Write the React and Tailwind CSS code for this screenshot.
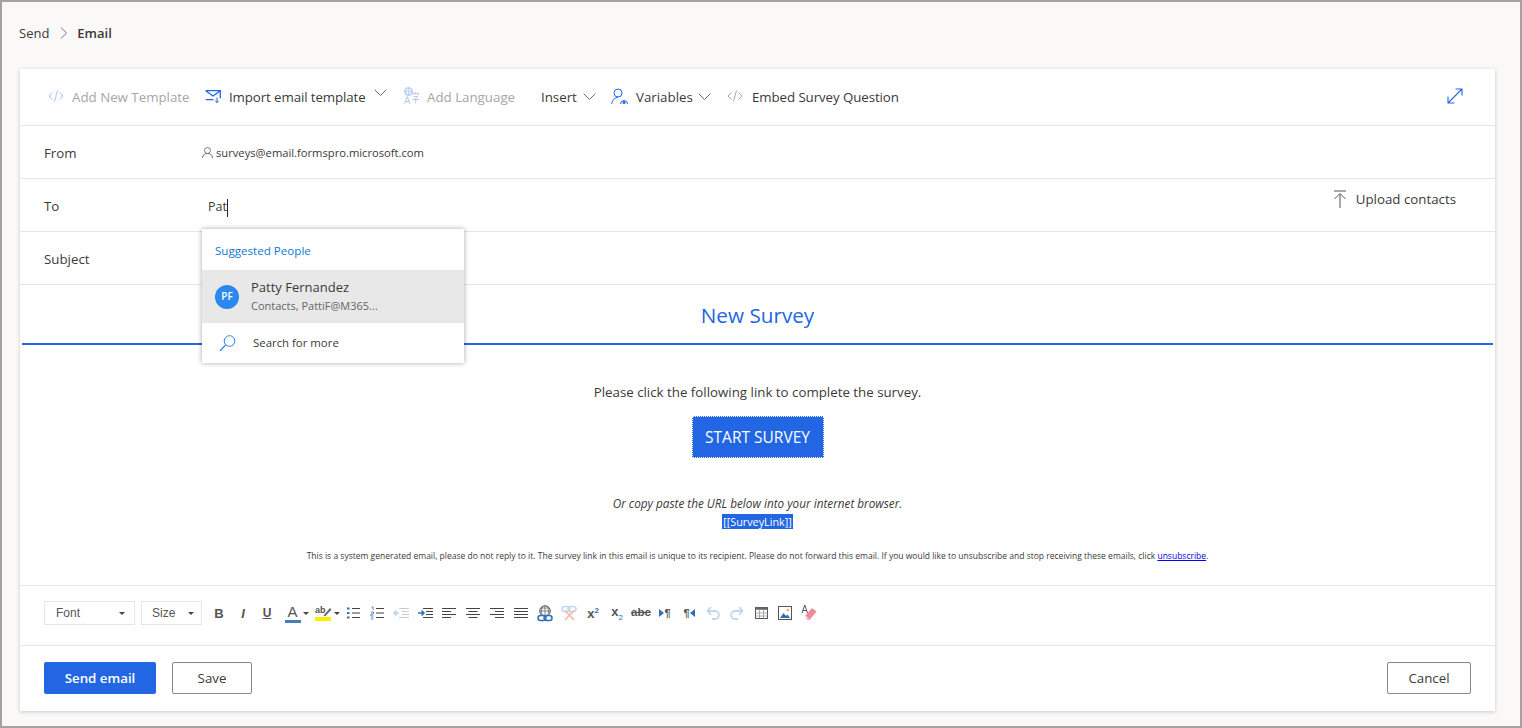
import React from "react";

const S = ({ w = 16, h = 16, vb, className = "", children }) => (
  <svg width={w} height={h} viewBox={vb || `0 0 ${w} ${h}`} fill="none" className={"shrink-0 " + className}>{children}</svg>
);
const Chevron = ({ className = "" }) => (
  <S w={13} h={8} className={className}><path d="M.7.7 6.500 6.500 12.300.7" stroke="#6b6b6b" strokeWidth="1" /></S>
);
const Code = ({ c }) => (
  <S w={16} h={12}><path d="M4.500 2.500 1 6l3.500 3.500M11.500 2.500 15 6l-3.500 3.500M9.500.5l-3 11" stroke={c} strokeWidth="1" /></S>
);
const Lines = ({ d }) => (
  <S w={14} h={12}><path d={d} stroke="#444" strokeWidth="1" /></S>
);
const Btn = ({ children }) => <div className="w-6 h-6 flex items-center justify-center shrink-0">{children}</div>;
const Cell = ({ className = "", children }) => <span className={"leading-none " + className}>{children}</span>;

export default function App() {
  return (
    <div className="w-[1522px] h-[728px] border-2 border-[#a3a3a3] bg-[#faf9f8] text-[#3b3a39] overflow-hidden text-[13.3px]" style={{ fontFamily: '"Open Sans","Noto Sans",sans-serif' }}>
      <div className="h-[67px] flex items-start pl-[17px] pt-[22px] text-[13px] leading-[18px]">
        <span>Send</span>
        <S w={8} h={12} className="ml-[11px] mr-[9px] mt-[3px]"><path d="M1 .5 6.500 6 1 11.500" stroke="#777" /></S>
        <span className="font-semibold">Email</span>
      </div>

      <div className="relative ml-[18px] w-[1475px] h-[642px] bg-white shadow-[0_1px_4px_rgba(0,0,0,0.2)] flex flex-col">
        {/* top toolbar */}
        <div className="h-[57px] shrink-0 border-b border-[#e6e6e6] flex items-center pl-[28px] pr-[32px]">
          <div className="-mt-[2px]"><Code c="#a9c4f2" /></div>
          <span className="ml-2 w-[117px] pt-[2px] whitespace-nowrap text-[#a6a6a6]">Add New Template</span>
          <S w={16} h={14} className="ml-[16px] -mt-[2px]"><path d="M.7 1.700h14.600v7.500M8.500 10.700H.7zM.7 1.700 8 7l7.300-5.300" stroke="#2266e3" strokeWidth="1.300" /><path d="M12 8.500v5M10.300 12 12 13.600 13.700 12" stroke="#2266e3" /></S>
          <span className="ml-2 w-[138px] pt-[2px] whitespace-nowrap tracking-[-0.1px]">Import email template</span>
          <Chevron className="ml-[7px] -mt-[8px]" />
          <S w={16} h={18} className="ml-[16px] -mt-[2px]"><circle cx="5.500" cy="4.500" r="4" stroke="#a9c4f2" /><path d="M1.500 4.500h8M5.500.5v8M3 4.500c0-4 5-4 5 0s-5 4-5 0" stroke="#a9c4f2" strokeWidth=".7" /><path d="M1.500 17l2.800-7.500L7 17M2.500 14.500h3.600M10 6.500h5.500v1.500M10 8V6.500M12.500 5v1.500M10.500 9.500h4l-1.800 2v5M9.500 12.500h6.500" stroke="#a9c4f2" strokeWidth=".9" /></S>
          <span className="ml-2 w-[90px] pt-[2px] whitespace-nowrap text-[#a6a6a6]">Add Language</span>
          <span className="ml-[24px] w-[34px] pt-[2px] whitespace-nowrap">Insert</span>
          <Chevron className="ml-2" />
          <S w={17} h={18} className="ml-[15px] -mt-[1px]"><circle cx="7" cy="5" r="4" stroke="#2266e3" /><path d="M.7 16c.4-4 3-6.500 6.300-6.500" stroke="#2266e3" /><path d="M9.500 16a3.500 3.500 0 0 1 7 0" stroke="#2266e3" /><circle cx="13" cy="14.500" r="1.500" fill="#2266e3" /></S>
          <span className="ml-[8px] w-[54px] pt-[2px] whitespace-nowrap">Variables</span>
          <Chevron className="ml-2" />
          <div className="ml-[16px] -mt-[2px]"><Code c="#a6a6a6" /></div>
          <span className="ml-[9px] pt-[2px] whitespace-nowrap tracking-[-0.08px]">Embed Survey Question</span>
          <S w={16} h={16} className="ml-auto -mt-[3px]"><path d="M1.500 14.500 14.500 1.500M8.500 1h6.500v6.500M1 8.500V15h6.500" stroke="#2266e3" strokeWidth="1.100" /></S>
        </div>

        {/* fields */}
        <div className="h-[53px] shrink-0 border-b border-[#e6e6e6] flex items-center pl-[24px]">
          <span className="w-[158px] pt-[4px]">From</span>
          <S w={11} h={11} className="mr-[3px]"><circle cx="5.500" cy="3.500" r="3" stroke="#777" /><path d="M.5 11c0-3 2-4.500 5-4.500s5 1.500 5 4.500" stroke="#777" /></S>
          <span className="text-[11.2px] pt-[2px]">surveys@email.formspro.microsoft.com</span>
        </div>
        <div className="h-[53px] shrink-0 border-b border-[#e6e6e6] flex items-center pl-[24px]">
          <span className="w-[164px] pt-[4px]">To</span>
          <span className="text-[12.500px] pt-[5px]">Pat</span>
          <span className="w-px h-[18px] bg-[#222] mt-[5px]" />
          <div className="ml-auto mr-[39px] -mt-[12px] flex items-center">
            <S w={14} h={18}><path d="M1 1h12M7 18V4M1.500 9 7 3.500 12.500 9" stroke="#555" /></S>
            <span className="ml-[9px] pt-[2px]">Upload contacts</span>
          </div>
        </div>
        <div className="h-[53px] shrink-0 border-b border-[#e6e6e6] flex items-center pl-[24px]">
          <span className="pt-[4px]">Subject</span>
        </div>

        {/* dropdown */}
        <div className="absolute left-[182px] top-[160px] w-[262px] h-[134px] bg-white shadow-[0_0_5px_rgba(0,0,0,0.35)] z-10 flex flex-col">
          <div className="h-[41px] flex items-center pl-[13px] pt-[3px] text-[11.6px] text-[#0f78d4]">Suggested People</div>
          <div className="h-[53px] bg-[#e8e8e8] flex items-center pl-[13px]">
            <div className="w-6 h-6 rounded-full bg-[#2b88ee] text-white text-[10px] font-semibold flex items-center justify-center">PF</div>
            <div className="ml-[12px] flex flex-col pb-[2px]">
              <span className="text-[13px] leading-[18px]">Patty Fernandez</span>
              <span className="mt-[2px] text-[11px] leading-[16px] text-[#666]">Contacts, PattiF@M365...</span>
            </div>
          </div>
          <div className="flex-1 flex items-center pl-[17px]">
            <S w={17} h={17}><circle cx="10.500" cy="6" r="5.300" stroke="#2b88ee" /><path d="M6.500 10 1 16" stroke="#2b88ee" strokeWidth="1.200" /></S>
            <span className="ml-[17px] text-[11.400px]">Search for more</span>
          </div>
        </div>

        {/* body */}
        <div className="h-[301px] shrink-0 border-b border-[#e6e6e6] flex flex-col items-center">
          <div className="h-[60px] w-[1471px] shrink-0 border-b-2 border-[#2266e3] flex items-center justify-center text-[20.700px] text-[#2266e3] pt-[3px]">New Survey</div>
          <p className="mt-[37px] leading-[20px] text-[13.300px]">Please click the following link to complete the survey.</p>
          <div className="mt-[14px] w-[132px] h-[42px] bg-[#2266e3] outline-1 -outline-offset-1 outline-dotted outline-white text-white text-[15.500px] pt-[2px] flex items-center justify-center">START SURVEY</div>
          <p className="mt-[36px] text-[11.750px] italic leading-[18px]">Or copy paste the URL below into your internet browser.</p>
          <p className="mt-[2px] bg-[#2266e3] text-white text-[10.800px] leading-[15px] px-px">[[SurveyLink]]</p>
          <p className="mt-[20px] text-[8.520px] leading-[14px] whitespace-nowrap">This is a system generated email, please do not reply to it. The survey link in this email is unique to its recipient. Please do not forward this email. If you would like to unsubscribe and stop receiving these emails, click <span className="text-[#0000ee] underline">unsubscribe</span>.</p>
        </div>

        {/* editor toolbar */}
        <div className="h-[61px] shrink-0 border-b border-[#e6e6e6] flex items-center pl-[24px] -mt-px pt-px pb-[5px]" style={{ fontFamily: '"Liberation Sans",sans-serif' }}>
          <div className="w-[91px] h-6 border border-[#e6e6e6] flex items-center justify-between pl-[11px] pr-[9px] text-[12px] text-[#555]">
            Font <span className="border-x-[3px] border-t-[3px] border-x-transparent border-t-[#444]" />
          </div>
          <div className="ml-[6px] w-[61px] h-6 border border-[#e6e6e6] flex items-center justify-between pl-[10px] pr-[7px] text-[12px] text-[#555]">
            Size <span className="border-x-[3px] border-t-[3px] border-x-transparent border-t-[#444]" />
          </div>
          <div className="ml-[5px] flex items-center text-[#555]">
            <Btn><Cell className="text-[13px] font-bold">B</Cell></Btn>
            <Btn><Cell className="text-[13px] italic font-bold" >I</Cell></Btn>
            <Btn><Cell className="text-[12px] font-bold underline">U</Cell></Btn>
            <div className="w-[31px] h-6 flex items-center pl-[5px] shrink-0">
              <div className="flex flex-col items-center w-[17px]"><Cell className="text-[15px]">A</Cell><span className="w-[16px] h-[3px] bg-[#4a7ebb] mt-[1px]" /></div>
              <span className="ml-[2px] border-x-[3px] border-t-[3px] border-x-transparent border-t-[#444]" />
            </div>
            <div className="w-[31px] h-6 flex items-center pl-[5px] shrink-0">
              <S w={17} h={16}>
                <text x="0" y="8" fontSize="9" fontWeight="700" fill="#555" fontFamily="Liberation Sans">ab</text>
                <path d="M9 10 15 3l1.500 1.500-6 6.500H8.500z" fill="#666" />
                <rect x="0" y="12" width="16" height="4" fill="#ffee00" />
              </S>
              <span className="ml-[2px] border-x-[3px] border-t-[3px] border-x-transparent border-t-[#444]" />
            </div>
            <Btn><S w={14} h={14}><path d="M6 2.500h8M6 7h8M6 11.500h8" stroke="#444" /><path d="M1 2.500h3M1 7h3M1 11.500h3" stroke="#2f6fb5" strokeWidth="2.200" strokeDasharray="2.500 1" /></S></Btn>
            <Btn><S w={14} h={14}><path d="M6 2.500h8M6 7h8M6 11.500h8" stroke="#444" /><path d="M1.500 1h1.500v3M1 6h2.500v2H1v2h2.500M1 12h2.500M1 14h2.500" stroke="#2f6fb5" strokeWidth=".8" /></S></Btn>
            <Btn><S w={16} h={12}><path d="M6 1.500h10M9 4.500h7M9 7.500h7M6 10.500h10" stroke="#ccc" /><path d="M6 6H1M3.500 3.500 1 6l2.500 2.500" stroke="#b7d0ec" strokeWidth="1.500" /></S></Btn>
            <Btn><S w={16} h={12}><path d="M6 1.500h10M9 4.500h7M9 7.500h7M6 10.500h10" stroke="#444" /><path d="M1 6h6M4.500 3.500 7 6 4.500 8.500" stroke="#2f6fb5" strokeWidth="1.500" /></S></Btn>
            <Btn><Lines d="M0 1.500h14M0 4.500h9M0 7.500h14M0 10.500h9" /></Btn>
            <Btn><Lines d="M0 1.500h14M2.500 4.500h9M0 7.500h14M2.500 10.500h9" /></Btn>
            <Btn><Lines d="M0 1.500h14M5 4.500h9M0 7.500h14M5 10.500h9" /></Btn>
            <Btn><Lines d="M0 1.500h14M0 4.500h14M0 7.500h14M0 10.500h14" /></Btn>
            <Btn><S w={16} h={17}><circle cx="8" cy="6" r="5.300" stroke="#555" /><path d="M2.700 6h10.600M8 .7v10.600M4 3h8M5.500 1.500c-1.500 3-1.500 6 0 9M10.500 1.500c1.500 3 1.500 6 0 9" stroke="#555" strokeWidth=".7" /><rect x="1" y="10.500" width="8" height="5" rx="2.500" fill="#fff" stroke="#2f6fb5" strokeWidth="1.500" /><rect x="7" y="10.500" width="8" height="5" rx="2.500" stroke="#2f6fb5" strokeWidth="1.500" /></S></Btn>
            <Btn><S w={16} h={16}><rect x="1" y="1.500" width="8" height="5" rx="2.500" stroke="#c6d6ea" strokeWidth="1.500" /><rect x="7" y="1.500" width="8" height="5" rx="2.500" stroke="#c6d6ea" strokeWidth="1.500" /><path d="M4 5.500 13 15M13 5.500 4 15" stroke="#f5b9ab" strokeWidth="1.800" /></S></Btn>
            <Btn><span className="text-[13px] font-bold leading-none">x<sup className="text-[8px] text-[#2f6fb5] font-bold static align-[5px] leading-none">2</sup></span></Btn>
            <Btn><span className="text-[13px] font-bold leading-none">x<sub className="text-[8px] text-[#2f6fb5] font-normal static align-[-4px] leading-none">2</sub></span></Btn>
            <Btn><span className="text-[11.500px] font-bold line-through leading-none">abc</span></Btn>
            <Btn><span className="flex items-center text-[11px] font-bold leading-none"><span className="border-y-[4px] border-l-[5px] border-y-transparent border-l-[#2f6fb5]" />¶</span></Btn>
            <Btn><span className="flex items-center text-[11px] font-bold leading-none">¶<span className="border-y-[4px] border-r-[5px] border-y-transparent border-r-[#2f6fb5]" /></span></Btn>
            <Btn><S w={14} h={14}><path d="M1.500 5H9a4 4 0 0 1 0 8H6M5 1 1.500 5 5 9" stroke="#c6d6ea" strokeWidth="1.800" /></S></Btn>
            <Btn><S w={14} h={14}><path d="M12.500 5H5a4 4 0 0 0 0 8h3M9 1l3.500 4L9 9" stroke="#c6d6ea" strokeWidth="1.800" /></S></Btn>
            <Btn><S w={13} h={12}><rect x=".5" y=".5" width="12" height="11" fill="#fff" stroke="#555" /><path d="M.5 1.500h12" stroke="#666" strokeWidth="2.500" /><path d="M.5 6h12M.5 9h12M4.500 3v8M8.500 3v8" stroke="#999" strokeWidth=".8" /></S></Btn>
            <Btn><S w={14} h={14}><rect x=".5" y=".5" width="13" height="13" stroke="#555" /><path d="M2 12l3.500-5 2.500 3 1.500-1.500L12 12z" fill="#2f6fb5" /><circle cx="10" cy="4" r="1.300" fill="#f0b050" /></S></Btn>
            <Btn><S w={16} h={18}><path d="M1 9l2.800-8L6.500 9M2 6.500h3.500" stroke="#555" /><path d="M4 12l7-8 4.500 3.500-7 8.500H6.500z" fill="#ee8a9a" /><path d="M4.500 12l3.500 3.500" stroke="#fff" /></S></Btn>
          </div>
        </div>

        {/* footer */}
        <div className="flex-1 flex items-start pt-[16px] pl-[24px] pr-[24px]">
          <div className="w-[112px] h-8 pt-[2px] rounded-[2px] bg-[#2266e3] text-white font-semibold flex items-center justify-center">Send email</div>
          <div className="ml-[16px] w-[80px] h-8 pt-[2px] rounded-[2px] border border-[#8a8886] flex items-center justify-center">Save</div>
          <div className="ml-auto w-[84px] h-8 pt-[2px] rounded-[2px] border border-[#8a8886] flex items-center justify-center">Cancel</div>
        </div>
      </div>
    </div>
  );
}
